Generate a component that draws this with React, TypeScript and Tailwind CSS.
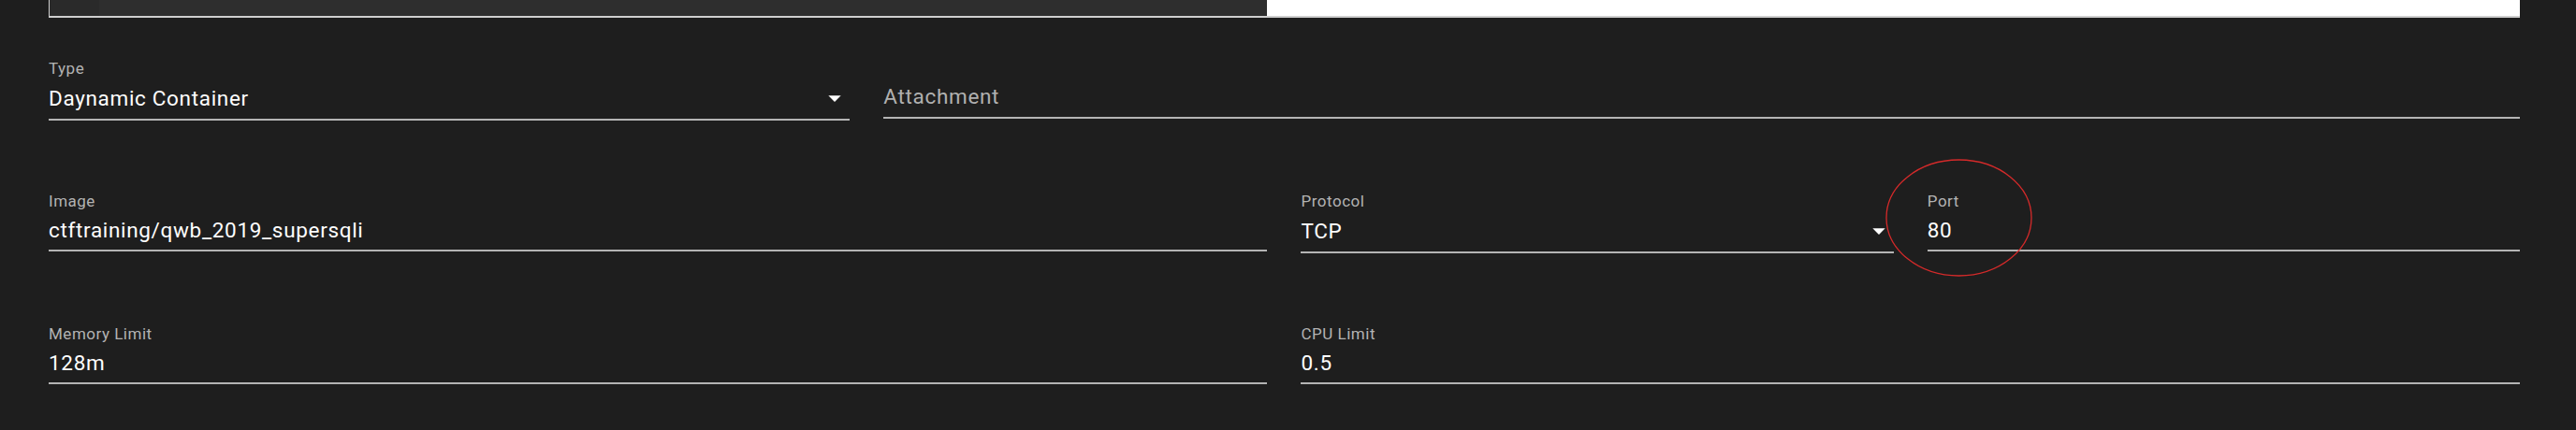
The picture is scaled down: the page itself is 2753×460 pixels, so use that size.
import React from 'react'

const font = { fontFamily: 'Roboto, "Noto Sans", sans-serif' }

const ArrowDrop = () => (
  <svg viewBox="0 0 24 24" className="w-[32px] h-[32px] shrink-0" fill="#ffffff">
    <path d="M7 10l5 5 5-5z" />
  </svg>
)

type FieldProps = {
  label?: string
  value: string
  placeholder?: boolean
  select?: boolean
  className?: string
}

const Field = ({ label, value, placeholder, select, className }: FieldProps) => (
  <div className={`flex flex-col ${className ?? ''}`}>
    <div className="text-[17px] leading-[16px] h-[16px] tracking-[0.03em] text-[#b3b3b3]">{label}</div>
    <div className="flex items-center pt-[8px] pb-[6px]">
      <div
        className={`flex-1 text-[22.5px] leading-[30px] h-[30px] tracking-[0.03em] whitespace-nowrap ${
          placeholder ? 'text-[#b0b0b0] -translate-y-[1px]' : 'text-white'
        }`}>
        {value}
      </div>
      {select && <ArrowDrop />}
    </div>
    <div className="h-[2px] bg-[#b4b4b4]" />
  </div>
)

export default function App() {
  return (
    <div className="relative w-full h-[460px] bg-[#1e1e1e] overflow-hidden" style={font}>
      {/* editor / preview strip cut off at the top */}
      <div className="pl-[52px] pr-[60px]">
        <div className="flex h-[19px] border-b-2 border-[#cfcfcf]">
          <div className="flex w-[1302px] border-l border-[#cfcfcf]">
            <div className="w-[53px] bg-[#2a2a2a]" />
            <div className="flex-1 bg-[#2e2e2e]" />
          </div>
          <div className="flex-1 bg-white" />
        </div>
      </div>

      <div className="pl-[52px] pr-[60px] pt-[46px]">
        <div className="grid grid-cols-12 gap-x-[36px] gap-y-[78px]">
          <Field className="col-span-4" label="Type" value="Daynamic Container" select />
          <Field className="col-span-8" value="Attachment" placeholder />

          <Field className="col-span-6" label="Image" value="ctftraining/qwb_2019_supersqli" />
          <Field className="col-span-3" label="Protocol" value="TCP" select />
          <Field className="col-span-3" label="Port" value="80" />

          <Field className="col-span-6" label="Memory Limit" value="128m" />
          <Field className="col-span-6" label="CPU Limit" value="0.5" />
        </div>
      </div>

      {/* hand-drawn annotation around the port field */}
      <svg
        className="absolute left-[2014px] top-[169px] pointer-events-none"
        width="160"
        height="130"
        viewBox="0 0 160 130">
        <ellipse cx="79.5" cy="64" rx="77.5" ry="62" fill="none" stroke="#d42a2a" strokeWidth="1.3" />
      </svg>
    </div>
  )
}
